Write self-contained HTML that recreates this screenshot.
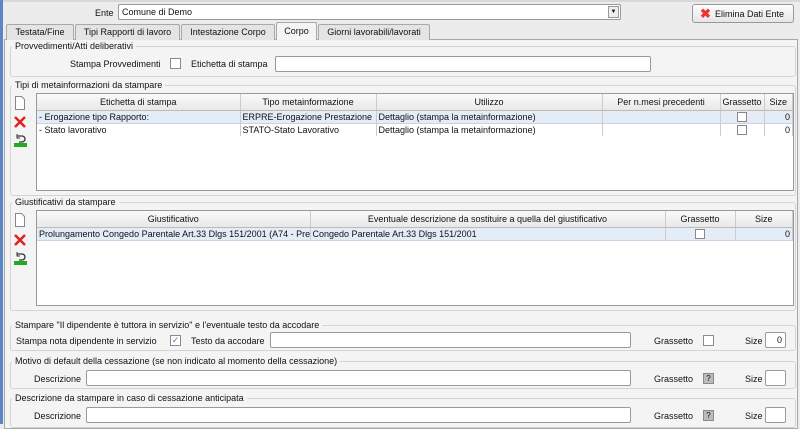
<!DOCTYPE html><html><head><style>
*{box-sizing:border-box;margin:0;padding:0}
body{width:800px;height:424px;overflow:hidden;background:#ececec;font-family:"Liberation Sans",sans-serif;font-size:9px;color:#111;position:relative}
.a{position:absolute;white-space:nowrap}
.in{position:absolute;background:#fff;border:1px solid #9a9a9a;border-radius:2px}
.grp{position:absolute;border:1px solid #d4d4d4;border-radius:3px}
.gt{position:absolute;background:#f4f4f4;padding:0 3px;white-space:nowrap}
.cb{position:absolute;width:11px;height:11px;border:1px solid #8a8a8a;background:#fff}
.tab{position:absolute;top:24px;height:16px;border:1px solid #a8a8a8;border-bottom:none;background:#e4e4e4;text-align:center;line-height:14px;border-radius:2px 2px 0 0}
table{border-collapse:collapse;position:absolute;background:#fff;font-size:9px}
td,th{border-right:1px solid #ccc;height:13px;padding:0 2px;white-space:nowrap;overflow:hidden;font-weight:normal}
th{background:linear-gradient(#fafafa,#e8e8e8);border-bottom:1px solid #bbb;height:16px}
.sel td{background:#e3ecf7;border-bottom:1px solid #c8d4e4}
.ic{position:absolute;left:14px}
</style></head><body>
<div class="a" style="left:0;top:0;width:3px;height:424px;background:#5b86c4"></div>
<div class="a" style="left:3px;top:0;right:0;height:2px;background:#d8d8d8"></div>
<div class="a" style="left:95px;top:8px">Ente</div>
<div class="in" style="left:118px;top:4px;width:503px;height:16px"><span class="a" style="left:3px;top:2px">Comune di Demo</span><span class="a" style="right:1px;top:1px;width:11px;height:12px;border:1px solid #999;background:#eee;font-size:6px;text-align:center;line-height:10px">▼</span></div>
<div class="a" style="left:692px;top:4px;width:102px;height:19px;border:1px solid #999;border-radius:3px;background:linear-gradient(#fdfdfd,#e6e6e6)"><span class="a" style="left:7px;top:1px;color:#e33;font-size:13px;font-weight:bold">✖</span><span class="a" style="left:22px;top:4px">Elimina Dati Ente</span></div>
<div class="a" style="left:4px;top:39px;width:794px;height:390px;background:#f4f4f4;border:1px solid #a8a8a8"></div>
<div class="tab" style="left:6px;width:68px">Testata/Fine</div>
<div class="tab" style="left:75px;width:105px">Tipi Rapporti di lavoro</div>
<div class="tab" style="left:181px;width:94px">Intestazione Corpo</div>
<div class="tab" style="left:276px;top:22px;width:41px;height:18px;background:#f4f4f4;line-height:17px">Corpo</div>
<div class="tab" style="left:318px;width:112px">Giorni lavorabili/lavorati</div>

<div class="grp" style="left:10px;top:46px;width:786px;height:31px"></div>
<div class="gt" style="left:12px;top:41px">Provvedimenti/Atti deliberativi</div>
<div class="a" style="left:70px;top:59px">Stampa Provvedimenti</div>
<div class="cb" style="left:170px;top:58px"></div>
<div class="a" style="left:191px;top:59px">Etichetta di stampa</div>
<div class="in" style="left:275px;top:56px;width:376px;height:16px"></div>

<div class="grp" style="left:10px;top:85px;width:786px;height:111px"></div>
<div class="gt" style="left:12px;top:80px">Tipi di metainformazioni da stampare</div>
<svg class="ic" style="top:96px" width="12" height="14"><path d="M1.5 0.5h6l3 3v10h-9z" fill="#fff" stroke="#888"/></svg>
<svg class="ic" style="top:116px" width="12" height="12"><path d="M1 1L11 11M11 1L1 11" stroke="#d22" stroke-width="2.5"/></svg>
<svg class="ic" style="top:134px" width="13" height="13"><path d="M3 2h5a3 3 0 010 6H5" fill="none" stroke="#333" stroke-width="1.3"/><path d="M3 0v4h3" fill="none" stroke="#333"/><rect x="0" y="9" width="13" height="4" fill="#2a2"/></svg>
<div class="a" style="left:36px;top:93px;width:758px;height:98px;background:#fff;border:1px solid #999"></div>
<table style="left:37px;top:94px;width:756px">
<tr><th style="width:203px">Etichetta di stampa</th><th style="width:136px">Tipo metainformazione</th><th style="width:226px">Utilizzo</th><th style="width:118px">Per n.mesi precedenti</th><th style="width:43px">Grassetto</th><th>Size</th></tr>
<tr class="sel"><td>- Erogazione tipo Rapporto:</td><td>ERPRE-Erogazione Prestazione</td><td>Dettaglio (stampa la metainformazione)</td><td></td><td style="text-align:center"><span style="display:inline-block;width:10px;height:10px;border:1px solid #888;background:#fff;vertical-align:middle"></span></td><td style="text-align:right">0</td></tr>
<tr><td>- Stato lavorativo</td><td>STATO-Stato Lavorativo</td><td>Dettaglio (stampa la metainformazione)</td><td></td><td style="text-align:center"><span style="display:inline-block;width:10px;height:10px;border:1px solid #888;background:#fff;vertical-align:middle"></span></td><td style="text-align:right">0</td></tr>
</table>

<div class="grp" style="left:10px;top:202px;width:786px;height:109px"></div>
<div class="gt" style="left:12px;top:197px">Giustificativi da stampare</div>
<svg class="ic" style="top:213px" width="12" height="14"><path d="M1.5 0.5h6l3 3v10h-9z" fill="#fff" stroke="#888"/></svg>
<svg class="ic" style="top:234px" width="12" height="12"><path d="M1 1L11 11M11 1L1 11" stroke="#d22" stroke-width="2.5"/></svg>
<svg class="ic" style="top:252px" width="13" height="13"><path d="M3 2h5a3 3 0 010 6H5" fill="none" stroke="#333" stroke-width="1.3"/><path d="M3 0v4h3" fill="none" stroke="#333"/><rect x="0" y="9" width="13" height="4" fill="#2a2"/></svg>
<div class="a" style="left:36px;top:210px;width:758px;height:96px;background:#fff;border:1px solid #999"></div>
<table style="left:37px;top:211px;width:756px">
<tr><th style="width:273px">Giustificativo</th><th style="width:355px">Eventuale descrizione da sostituire a quella del giustificativo</th><th style="width:70px">Grassetto</th><th>Size</th></tr>
<tr class="sel"><td style="max-width:273px">Prolungamento Congedo Parentale Art.33 Dlgs 151/2001 (A74 - Pre</td><td>Congedo Parentale Art.33 Dlgs 151/2001</td><td style="text-align:center"><span style="display:inline-block;width:10px;height:10px;border:1px solid #888;background:#fff;vertical-align:middle"></span></td><td style="text-align:right">0</td></tr>
</table>

<div class="grp" style="left:10px;top:325px;width:786px;height:26px"></div>
<div class="gt" style="left:12px;top:320px">Stampare "Il dipendente è tuttora in servizio" e l'eventuale testo da accodare</div>
<div class="a" style="left:16px;top:336px">Stampa nota dipendente in servizio</div>
<div class="cb" style="left:170px;top:335px;color:#4a7fc0;font-size:9px;line-height:9px;text-align:center">✓</div>
<div class="a" style="left:191px;top:336px">Testo da accodare</div>
<div class="in" style="left:270px;top:332px;width:361px;height:16px"></div>
<div class="a" style="left:654px;top:336px">Grassetto</div>
<div class="cb" style="left:703px;top:335px"></div>
<div class="a" style="left:745px;top:336px">Size</div>
<div class="in" style="left:765px;top:332px;width:21px;height:16px;text-align:right;padding-right:3px;line-height:14px">0</div>

<div class="grp" style="left:10px;top:361px;width:786px;height:28px"></div>
<div class="gt" style="left:12px;top:356px">Motivo di default della cessazione (se non indicato al momento della cessazione)</div>
<div class="a" style="left:34px;top:374px">Descrizione</div>
<div class="in" style="left:86px;top:370px;width:545px;height:16px"></div>
<div class="a" style="left:654px;top:374px">Grassetto</div>
<div class="cb" style="left:703px;top:373px;background:#bbb;font-size:8px;line-height:9px;text-align:center">?</div>
<div class="a" style="left:745px;top:374px">Size</div>
<div class="in" style="left:765px;top:370px;width:21px;height:16px"></div>

<div class="grp" style="left:10px;top:398px;width:786px;height:30px"></div>
<div class="gt" style="left:12px;top:393px">Descrizione da stampare in caso di cessazione anticipata</div>
<div class="a" style="left:34px;top:411px">Descrizione</div>
<div class="in" style="left:86px;top:407px;width:545px;height:16px"></div>
<div class="a" style="left:654px;top:411px">Grassetto</div>
<div class="cb" style="left:703px;top:410px;background:#bbb;font-size:8px;line-height:9px;text-align:center">?</div>
<div class="a" style="left:745px;top:411px">Size</div>
<div class="in" style="left:765px;top:407px;width:21px;height:16px"></div>
</body></html>
